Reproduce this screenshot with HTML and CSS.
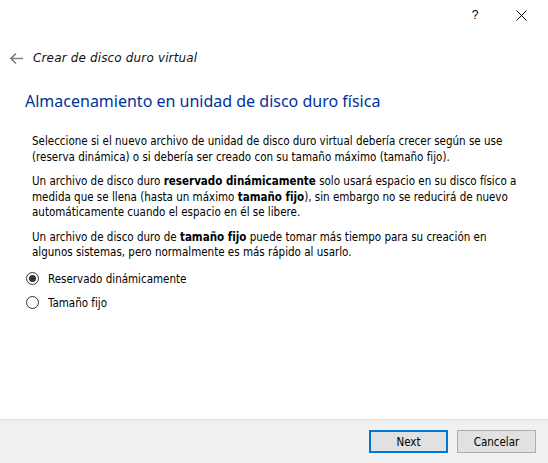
FILE: index.html
```html
<!DOCTYPE html>
<html lang="es">

<head>
    <meta charset="UTF-8">
    <title>Crear de disco duro virtual</title>
    <link rel="stylesheet" href="styles.css">
</head>

<body>
    <div class="titlebar">
        <span class="title-btn">?</span>
        <span class="title-btn">
            <svg width="11" height="11" viewBox="0 0 11 11">
                <path d="M0.5 0.5 L10.5 10.5 M10.5 0.5 L0.5 10.5" stroke="#000" stroke-width="1" fill="none" />
            </svg>
        </span>
    </div>

    <div class="wizard-header">
        <svg class="back-arrow" width="13" height="11" viewBox="0 0 13 11">
            <path d="M6 0.5 L1 5.5 L6 10.5 M1 5.5 L13 5.5" stroke="#808080" stroke-width="1.6" fill="none" />
        </svg>
        <span class="wizard-title">Crear de disco duro virtual</span>
    </div>

    <div class="page">
        <h1>Almacenamiento en unidad de disco duro física</h1>

        <p>Seleccione si el nuevo archivo de unidad de disco duro virtual debería crecer según se use<br>
            (reserva dinámica) o si debería ser creado con su tamaño máximo (tamaño fijo).</p>

        <p>Un archivo de disco duro <b>reservado dinámicamente</b> solo usará espacio en su disco físico a<br>
            medida que se llena (hasta un máximo <b>tamaño fijo</b>), sin embargo no se reducirá de nuevo<br>
            automáticamente cuando el espacio en él se libere.</p>

        <p>Un archivo de disco duro de <b>tamaño fijo</b> puede tomar más tiempo para su creación en<br>
            algunos sistemas, pero normalmente es más rápido al usarlo.</p>

        <div class="options">
            <label class="radio checked"><span class="dot"></span>Reservado dinámicamente</label>
            <label class="radio"><span class="dot"></span>Tamaño fijo</label>
        </div>
    </div>

    <div class="footer">
        <button class="btn default">Next</button>
        <button class="btn">Cancelar</button>
    </div>
</body>

</html>
```

FILE: styles.css
```css
html, body {
    height: 100%;
    margin: 0;
    padding: 0;
}

body {
    display: flex;
    flex-direction: column;
    background-color: #fff;
    color: #000;
    font-family: "DejaVu Sans Condensed", "DejaVu Sans", sans-serif;
    font-size: 11.5px;
}

.titlebar {
    display: flex;
    justify-content: flex-end;
    height: 30px;
    padding-right: 4px;
}

.title-btn {
    display: flex;
    align-items: center;
    justify-content: center;
    width: 46px;
    height: 30px;
    font-family: "Liberation Sans", sans-serif;
    font-size: 12px;
}

.title-btn:first-child {
    margin-right: 3px;
    width: 40px;
}

.wizard-header {
    display: flex;
    align-items: center;
    height: 16px;
    margin-top: 20px;
    padding-left: 10px;
}

.back-arrow {
    margin-right: 10px;
}

.wizard-title {
    font-family: "DejaVu Sans", sans-serif;
    font-size: 12px;
    font-style: italic;
    letter-spacing: 0.15px;
    color: #111;
}

.page {
    padding: 0 20px 0 32px;
}

h1 {
    margin: 25px 0 23px -7px;
    font-family: "Noto Sans", sans-serif;
    font-size: 16px;
    font-weight: normal;
    line-height: 20px;
    color: #003399;
}

p {
    margin: 0 0 9px 0;
    line-height: 15.5px;
    white-space: nowrap;
}

.options {
    display: flex;
    flex-direction: column;
    gap: 8px;
    margin-top: 10px;
    margin-left: -6px;
}

.radio {
    display: flex;
    align-items: center;
    height: 16px;
}

.radio .dot {
    box-sizing: border-box;
    width: 13px;
    height: 13px;
    margin-right: 9px;
    border: 1px solid #333;
    border-radius: 50%;
    position: relative;
}

.radio.checked .dot::after {
    content: "";
    position: absolute;
    left: 2px;
    top: 2px;
    width: 7px;
    height: 7px;
    border-radius: 50%;
    background-color: #333;
}

.footer {
    display: flex;
    justify-content: flex-end;
    gap: 9px;
    margin-top: auto;
    height: 44px;
    box-sizing: border-box;
    padding: 10px 12px 0 0;
    background-color: #f0f0f0;
    border-top: 1px solid #dfdfdf;
}

.btn {
    box-sizing: border-box;
    width: 79px;
    height: 23px;
    border: 1px solid #adadad;
    background-color: #e1e1e1;
    font-family: "DejaVu Sans Condensed", "DejaVu Sans", sans-serif;
    font-size: 11.5px;
    color: #000;
}

.btn.default {
    border: 2px solid #0078d7;
}
```
